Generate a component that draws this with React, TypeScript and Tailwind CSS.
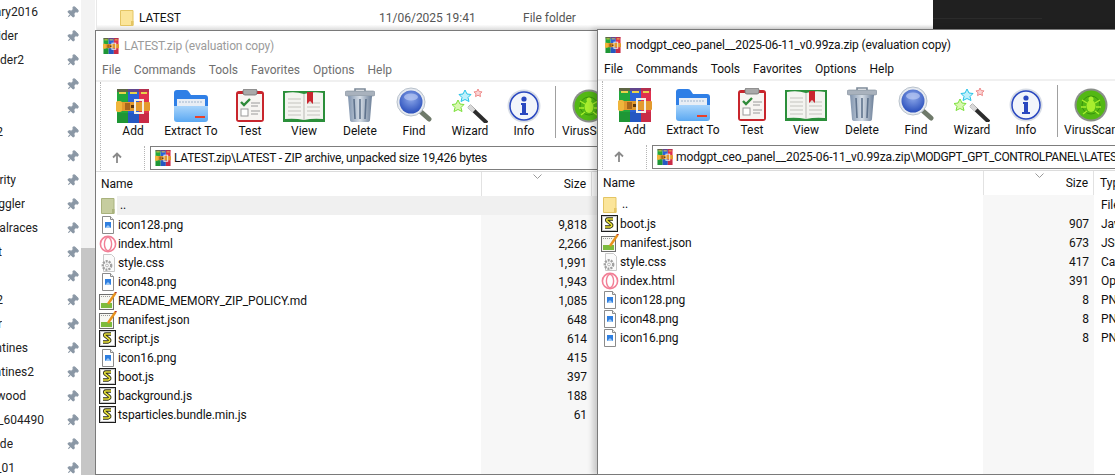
import React from 'react';
import { Pin } from 'lucide-react';

const sideRows = [
  { text: 'ary2016', w: 'w-[38px]' },
  { text: 'ider', w: 'w-[18px]' },
  { text: 'ider2', w: 'w-[24px]' },
  { text: '', w: 'w-[1px]' },
  { text: '', w: 'w-[1px]' },
  { text: '2', w: 'w-[3px]' },
  { text: '', w: 'w-[1px]' },
  { text: 'rity', w: 'w-[16px]' },
  { text: 'ggler', w: 'w-[25px]' },
  { text: 'ialraces', w: 'w-[38px]' },
  { text: 't', w: 'w-[2px]' },
  { text: '', w: 'w-[1px]' },
  { text: '2', w: 'w-[3px]' },
  { text: 'r', w: 'w-[2px]' },
  { text: 'ntines', w: 'w-[28px]' },
  { text: 'ntines2', w: 'w-[34px]' },
  { text: 'wood', w: 'w-[26px]' },
  { text: 's_604490', w: 'w-[44px]' },
  { text: 'de', w: 'w-[13px]' },
  { text: '_01', w: 'w-[15px]' },
];

type FileKind = 'png' | 'opera' | 'css' | 'note' | 'js';
type FileRow = { name: string; size: string; kind: FileKind; type?: string };

const leftFiles: FileRow[] = [
  { name: 'icon128.png', size: '9,818', kind: 'png' },
  { name: 'index.html', size: '2,266', kind: 'opera' },
  { name: 'style.css', size: '1,991', kind: 'css' },
  { name: 'icon48.png', size: '1,943', kind: 'png' },
  { name: 'README_MEMORY_ZIP_POLICY.md', size: '1,085', kind: 'note' },
  { name: 'manifest.json', size: '648', kind: 'note' },
  { name: 'script.js', size: '614', kind: 'js' },
  { name: 'icon16.png', size: '415', kind: 'png' },
  { name: 'boot.js', size: '397', kind: 'js' },
  { name: 'background.js', size: '188', kind: 'js' },
  { name: 'tsparticles.bundle.min.js', size: '61', kind: 'js' },
];

const rightFiles: FileRow[] = [
  { name: 'boot.js', size: '907', kind: 'js', type: 'JavaScript' },
  { name: 'manifest.json', size: '673', kind: 'note', type: 'JSON File' },
  { name: 'style.css', size: '417', kind: 'css', type: 'Cascading' },
  { name: 'index.html', size: '391', kind: 'opera', type: 'Opera Web' },
  { name: 'icon128.png', size: '8', kind: 'png', type: 'PNG File' },
  { name: 'icon48.png', size: '8', kind: 'png', type: 'PNG File' },
  { name: 'icon16.png', size: '8', kind: 'png', type: 'PNG File' },
];

function RarIcon({ size = 34 }: { size?: number }) {
  return (
    <svg width={size} height={size} viewBox="0 0 34 34" className="shrink-0">
      <rect x="1" y="0" width="11" height="34" fill="#22a83c" />
      <rect x="12" y="0" width="11" height="34" fill="#2a62d8" />
      <rect x="23" y="0" width="10" height="34" fill="#e0304e" />
      <rect x="1" y="0" width="32" height="3" fill="#8f2f4f" opacity="0.55" />
      <rect x="3" y="3" width="7" height="2" fill="#e8d24a" />
      <rect x="14" y="3" width="7" height="2" fill="#e8d24a" />
      <rect x="25" y="3" width="6" height="2" fill="#e8d24a" />
      <rect x="1" y="24" width="32" height="10" fill="#000" opacity="0.1" />
      <rect x="0" y="13" width="34" height="9" rx="1" fill="#e39a2e" />
      <rect x="0" y="12" width="6" height="11" rx="2" fill="#f0b63c" />
      <rect x="9" y="14" width="5" height="7" fill="#a9661c" />
      <rect x="19" y="11" width="8" height="13" fill="none" stroke="#f2efe6" strokeWidth="2" />
      <rect x="15" y="16" width="3" height="3" fill="#5b3510" />
    </svg>
  );
}

function ExtractIcon() {
  return (
    <svg width="36" height="34" viewBox="0 0 36 34">
      <defs>
        <linearGradient id="fold" x1="0" y1="0" x2="0" y2="1">
          <stop offset="0" stopColor="#a8d4fb" />
          <stop offset="1" stopColor="#5aa8f2" />
        </linearGradient>
      </defs>
      <path d="M1 4q0-3 3-3h9q2 0 3 2l2 3h14q3 0 3 3v8H1z" fill="#2f7fe6" />
      <rect x="4" y="10" width="28" height="10" fill="#e9eef5" />
      <path d="M6 13h24" stroke="#9fb4cc" strokeWidth="1" strokeDasharray="2 1" />
      <path d="M1 17h34v13q0 3-3 3H4q-3 0-3-3z" fill="url(#fold)" />
      <rect x="22" y="27" width="10" height="2" fill="#e8402a" />
    </svg>
  );
}

function TestIcon() {
  return (
    <svg width="30" height="34" viewBox="0 0 30 34">
      <rect x="1" y="2" width="28" height="31" rx="3" fill="#c8252c" />
      <rect x="3" y="5" width="24" height="26" fill="#f7f5f2" />
      <rect x="8" y="0" width="14" height="6" rx="2" fill="#a9a9a9" stroke="#6e6e6e" strokeWidth="0.8" />
      <path d="M6 13l3 3 6-6" stroke="#2f8a3a" strokeWidth="2.4" fill="none" />
      <path d="M16 14h9M16 17h7M16 22h9M16 25h7" stroke="#9a9a9a" strokeWidth="1" />
      <rect x="6" y="20" width="7" height="7" fill="#fff" stroke="#9a9a9a" />
    </svg>
  );
}

function ViewIcon() {
  return (
    <svg width="42" height="33" viewBox="0 0 42 33">
      <rect x="0" y="1" width="42" height="31" fill="#2b8f3a" />
      <path d="M2 3q10-2 19 1q9-3 19-1v26q-10-1-19 1q-9-2-19-1z" fill="#f4f4f0" />
      <path d="M21 4v26" stroke="#b9b9b4" strokeWidth="1" />
      <path d="M5 9h13M5 13h13M5 17h13M5 21h13M5 25h13M24 13h13M24 17h13M24 21h13M24 25h13" stroke="#c3c3be" strokeWidth="1.2" />
      <path d="M24 2h6v12l-3-3-3 3z" fill="#c9252f" />
    </svg>
  );
}

function TrashIcon() {
  return (
    <svg width="30" height="35" viewBox="0 0 30 35">
      <defs>
        <linearGradient id="can" x1="0" y1="0" x2="1" y2="0">
          <stop offset="0" stopColor="#7f93ad" />
          <stop offset="0.5" stopColor="#d5dde6" />
          <stop offset="1" stopColor="#6d8099" />
        </linearGradient>
      </defs>
      <path d="M10 3V1h10v2" fill="none" stroke="#7d8a99" strokeWidth="1.6" />
      <rect x="0" y="3" width="30" height="5" rx="2" fill="#a9b2bd" stroke="#7d8a99" strokeWidth="0.6" />
      <path d="M3 8h24l-2 24q0 2-3 2H8q-3 0-3-2z" fill="url(#can)" />
      <path d="M9 11l1 20M15 11v20M21 11l-1 20" stroke="#5f738d" strokeWidth="1.6" />
    </svg>
  );
}

function FindIcon() {
  return (
    <svg width="36" height="36" viewBox="0 0 36 36">
      <defs>
        <radialGradient id="lens" cx="0.5" cy="0.35" r="0.7">
          <stop offset="0" stopColor="#8ea9ea" />
          <stop offset="1" stopColor="#2248b8" />
        </radialGradient>
      </defs>
      <path d="M24 24l9 8" stroke="#6f7a6a" strokeWidth="5" strokeLinecap="round" />
      <circle cx="15" cy="15" r="14" fill="#e6eaf0" stroke="#b9c2cc" strokeWidth="1" />
      <circle cx="15" cy="15" r="11.5" fill="url(#lens)" />
      <ellipse cx="15" cy="10" rx="7" ry="3.5" fill="#b8c8f2" opacity="0.7" />
    </svg>
  );
}

function WizardIcon() {
  return (
    <svg width="36" height="34" viewBox="0 0 36 34">
      <path d="M17 17l18 17" stroke="#2c2c2c" strokeWidth="4" />
      <path d="M17 17l5 5" stroke="#d8d8d8" strokeWidth="4" />
      <path d="M13 1l2 4 4 .5-3 3 1 4-4-2-4 2 1-4-3-3 4-.5z" fill="#bff0fb" stroke="#28c3e8" />
      <path d="M26 0l1.2 2.6 2.8.3-2 2 .5 2.7-2.5-1.4-2.5 1.4.5-2.7-2-2 2.8-.3z" fill="#fbd6d6" stroke="#ee8a8a" />
      <path d="M6 11l2 4 4 .5-3 3 1 4-4-2-4 2 1-4-3-3 4-.5z" fill="#d8f8b0" stroke="#7be03a" />
    </svg>
  );
}

function InfoIcon() {
  return (
    <svg width="34" height="34" viewBox="0 0 34 34">
      <circle cx="17" cy="17" r="16.5" fill="#d8dde6" />
      <circle cx="17" cy="17" r="14" fill="#f2f5fb" stroke="#2a48c0" strokeWidth="1.5" />
      <circle cx="17" cy="10" r="2.6" fill="#2a48c0" />
      <path d="M14 14h5v10h2v2h-8v-2h2v-8h-1z" fill="#2a48c0" />
    </svg>
  );
}

function VirusIcon() {
  return (
    <svg width="34" height="34" viewBox="0 0 34 34">
      <circle cx="17" cy="17" r="16.5" fill="#8a8f8a" />
      <circle cx="17" cy="17" r="14.5" fill="#53b814" />
      <circle cx="17" cy="17" r="9" fill="none" stroke="#3a930c" strokeWidth="1" />
      <ellipse cx="17" cy="18" rx="4.5" ry="6" fill="#a8ee2e" />
      <circle cx="17" cy="11" r="2.5" fill="#a8ee2e" />
      <path d="M8 12l5 3M26 12l-5 3M7 19h5M27 19h-5M9 26l4-3M25 26l-4-3" stroke="#a8ee2e" strokeWidth="1.4" />
    </svg>
  );
}

function ToolButton({ label, width, children }: { label: string; width: string; children: React.ReactNode }) {
  return (
    <div className={`flex flex-col items-center shrink-0 ${width}`}>
      <div className="h-[36px] flex items-end justify-center">{children}</div>
      <span className="text-[12px] leading-[16px] whitespace-nowrap">{label}</span>
    </div>
  );
}

function SmallFolder({ color = '#fbe59a', edge = '#e4c564', h = 'h-[16px]' }: { color?: string; edge?: string; h?: string }) {
  return (
    <svg width="14" height="16" viewBox="0 0 14 16" className={h}>
      <path d="M.5.5h12.5v15H.5z" fill={color} stroke={edge} />
      <rect x="11" y="11" width="2.5" height="4.5" fill={edge} />
    </svg>
  );
}

function FileIcon({ kind }: { kind: FileKind }) {
  if (kind === 'png') {
    return (
      <svg width="18" height="18" viewBox="0 0 18 18">
        <path d="M3.5.5h8l3 3v14h-11z" fill="#fff" stroke="#8b8b8b" />
        <path d="M11.5.5v3h3" fill="#eee" stroke="#8b8b8b" />
        <rect x="6" y="6" width="6" height="6" fill="#2f7fe0" />
        <path d="M6 12l3-3 3 3z" fill="#9ec8f4" />
      </svg>
    );
  }
  if (kind === 'opera') {
    return (
      <svg width="18" height="18" viewBox="0 0 18 18">
        <circle cx="9" cy="9" r="7.6" fill="#fff" stroke="#f27f96" strokeWidth="1.6" />
        <ellipse cx="9" cy="9" rx="3.6" ry="6.6" fill="#fff" stroke="#f27f96" strokeWidth="1.4" />
      </svg>
    );
  }
  if (kind === 'css') {
    return (
      <svg width="18" height="18" viewBox="0 0 18 18">
        <path d="M4.5.5h8l3 3v14h-11z" fill="#fbfbfb" stroke="#c9c9c9" />
        <circle cx="8" cy="11.5" r="4.2" fill="none" stroke="#a0a0a0" strokeWidth="2.4" strokeDasharray="2 1" />
        <circle cx="8" cy="11.5" r="1.4" fill="#fff" stroke="#b5b5b5" />
      </svg>
    );
  }
  if (kind === 'note') {
    return (
      <svg width="18" height="18" viewBox="0 0 18 18">
        <rect x="0.5" y="2.5" width="14" height="15" fill="#f7f7f2" stroke="#6e6e6e" />
        <path d="M2 4.5h10" stroke="#9a9a9a" strokeDasharray="1 1" />
        <rect x="2" y="11" width="11" height="5" fill="#7dbb3c" />
        <path d="M16.5 1L9 12" stroke="#e8931e" strokeWidth="2.4" />
        <path d="M16 0l1.5 1" stroke="#b02a1e" strokeWidth="1.5" />
      </svg>
    );
  }
  return (
    <svg width="18" height="18" viewBox="0 0 18 18">
      <rect x="0.5" y="0.5" width="16" height="16" fill="#fff" stroke="#1c1c1c" />
      <rect x="1.5" y="1.5" width="14" height="14" fill="none" stroke="#c8c8c8" />
      <path d="M12 4H7Q5 4 6 6l4 3q2 2-1 3H4" fill="none" stroke="#2b2b12" strokeWidth="3.4" />
      <path d="M12 4H7Q5 4 6 6l4 3q2 2-1 3H4" fill="none" stroke="#eae23a" strokeWidth="1.6" />
    </svg>
  );
}

function ZipWindow({
  active,
  position,
  title,
  address,
  addressClass,
  addressTail,
  files,
  upColor,
  upEdge,
  upBg,
  upType,
}: {
  active: boolean;
  position: string;
  title: string;
  address: string;
  addressClass: string;
  addressTail?: string;
  files: FileRow[];
  upColor: string;
  upEdge: string;
  upBg: string;
  upType?: string;
}) {
  const sizeCol = 'w-[111px] self-stretch shrink-0';
  return (
    <div className={`absolute flex flex-col overflow-hidden bg-white border border-[#7a7a7a] ${position}`}>
      <div className="flex items-center h-[29px] pl-[7px] gap-[5px] shrink-0">
        <RarIcon size={16} />
        <span className={`pt-[1px] text-[12px] tracking-[-0.14px] whitespace-nowrap ${active ? 'text-[#111]' : 'text-[#9b9b9b]'}`}>{title}</span>
      </div>
      <div className={`flex items-center h-[20px] pl-[6px] gap-[13px] text-[12px] shrink-0 ${active ? 'text-[#111]' : 'text-[#6f6f6f]'}`}>
        <span>File</span>
        <span>Commands</span>
        <span>Tools</span>
        <span>Favorites</span>
        <span>Options</span>
        <span>Help</span>
      </div>
      <div className="flex h-[66px] shrink-0 border-t-2 border-[#f0f0f0] text-[#111]">
        <div className="w-[4px] shrink-0" />
        <div className="h-[88px] w-[1px] shrink-0 border-l border-dotted border-[#b5b5b5]" />
        <div className="flex pl-[9px] pt-[5px]">
          <ToolButton label="Add" width="w-[46px]"><RarIcon /></ToolButton>
          <ToolButton label="Extract To" width="w-[70px]"><ExtractIcon /></ToolButton>
          <ToolButton label="Test" width="w-[48px]"><TestIcon /></ToolButton>
          <ToolButton label="View" width="w-[60px]"><ViewIcon /></ToolButton>
          <ToolButton label="Delete" width="w-[52px]"><TrashIcon /></ToolButton>
          <ToolButton label="Find" width="w-[56px]"><FindIcon /></ToolButton>
          <ToolButton label="Wizard" width="w-[56px]"><WizardIcon /></ToolButton>
          <ToolButton label="Info" width="w-[52px]"><InfoIcon /></ToolButton>
          <div className="ml-[5px] mt-[-1px] h-[52px] w-[1px] shrink-0 bg-[#a0a0a0]" />
          <ToolButton label="VirusScan" width="w-[66px]"><VirusIcon /></ToolButton>
        </div>
      </div>
      <div className="flex h-[24px] shrink-0">
        <div className="w-[48px] shrink-0 flex items-center pl-[15px]">
          <svg width="12" height="12" viewBox="0 0 12 12">
            <path d="M6 11V2M2 5.5L6 1.5l4 4" fill="none" stroke="#8a8a8a" strokeWidth="1.8" />
          </svg>
        </div>
        <div className="w-[1px] shrink-0 border-l border-dotted border-[#b5b5b5]" />
        <div className="ml-[5px] grow flex items-center gap-[3px] pl-[4px] border border-[#7d7d7d] overflow-hidden">
          <RarIcon size={16} />
          <span className="text-[12px] text-[#111] whitespace-nowrap">
            <span className={addressClass}>{address}</span>
            {addressTail && <span className="tracking-[-0.4px]">{addressTail}</span>}
          </span>
        </div>
      </div>
      <div className="flex h-[25px] shrink-0 mt-[1px] border-t border-[#dcdcdc] text-[12px] text-[#111]">
        <div className="w-[385px] shrink-0 flex items-center pl-[5px]">Name</div>
        <div className={`${sizeCol} relative flex items-center justify-end pr-[5px] border-x border-[#e2e2e2]`}>
          Size
          <svg width="9" height="5" viewBox="0 0 9 5" className="absolute top-[2px] left-[51px]">
            <path d="M.5.5l4 4 4-4" fill="none" stroke="#9a9a9a" />
          </svg>
        </div>
        {upType !== undefined && <div className="flex items-center pl-[6px] whitespace-nowrap">Type</div>}
      </div>
      <div className="flex flex-col grow text-[12px] tracking-[-0.1px] text-[#111]">
        <div className="flex h-[19px] shrink-0 items-center">
          <div className="w-[385px] self-stretch shrink-0 flex items-center pl-[5px] gap-[2px]">
            <SmallFolder color={upColor} edge={upEdge} />
            <span className={`grow self-stretch leading-[19px] pl-[3px] ${upBg}`}>..</span>
          </div>
          <div className={`${sizeCol} ${upBg === 'bg-white' ? 'bg-[#f7f7f7]' : upBg}`} />
          {upType !== undefined && <span className="pl-[7px] whitespace-nowrap">{upType}</span>}
          {upType === undefined && <div className={`grow self-stretch ${upBg}`} />}
        </div>
        {files.map((f) => (
          <div key={f.name} className="flex h-[19px] shrink-0 items-center">
            <div className="w-[385px] shrink-0 flex items-center pl-[3px] gap-[1px]">
              <FileIcon kind={f.kind} />
              <span className="whitespace-nowrap">{f.name}</span>
            </div>
            <div className={`${sizeCol} flex items-center justify-end pr-[5px] bg-[#f7f7f7]`}>{f.size}</div>
            {f.type ? <span className="pl-[7px] whitespace-nowrap">{f.type}</span> : <div className="grow self-stretch bg-[#f7f7f7]" />}
          </div>
        ))}
        <div className="flex grow">
          <div className="w-[385px] shrink-0" />
          <div className={`${sizeCol} bg-[#f7f7f7]`} />
          {upType === undefined && <div className="grow bg-[#f7f7f7]" />}
        </div>
      </div>
    </div>
  );
}

export default function App() {
  return (
    <div
      className="relative w-[1115px] h-[475px] overflow-hidden bg-white text-[12px] text-[#111]"
      style={{ fontFamily: 'Roboto, "Noto Sans", sans-serif' }}
    >
      <div className="flex h-full">
        <div className="w-[81px] shrink-0 flex flex-col">
          {sideRows.map((r, i) => (
            <div key={i} className="flex items-center h-6 shrink-0">
              <div className="w-[66px] shrink-0">
                <div className={`flex justify-end overflow-hidden whitespace-nowrap text-[#222] ${r.w}`}>{r.text}</div>
              </div>
              <Pin size={13} className="rotate-45 text-[#8a97a5] fill-[#8a97a5]" />
            </div>
          ))}
        </div>
        <div className="w-[14px] shrink-0 flex flex-col bg-[#f3f3f3]">
          <div className="h-[248px] shrink-0" />
          <div className="grow bg-[#c6c6c6]" />
        </div>
        <div className="w-[837px] shrink-0 relative border-l border-[#e8e8e8] ml-[1px]">
          <div className="flex items-center h-[35px] pl-[23px] bg-gradient-to-b from-white from-70% to-[#bdbdbd]">
            <SmallFolder />
            <span className="ml-[5px] w-[240px] pt-[1px]">LATEST</span>
            <span className="w-[144px] pt-[1px] text-[#555]">11/06/2025 19:41</span>
            <span className="pt-[1px] text-[#555]">File folder</span>
          </div>
        </div>
        <div className="grow bg-[#202020] flex flex-col">
          <div className="h-[19px] w-[109px] border-b border-[#2b2b2b]" />
        </div>
      </div>

      <ZipWindow
        active={false}
        position="left-[95px] top-[30px] w-[510px] h-[445px]"
        title="LATEST.zip (evaluation copy)"
        address="LATEST.zip\LATEST - ZIP archive, unpacked size 19,426 bytes"
        addressClass="tracking-[-0.24px]"
        files={leftFiles}
        upColor="#c6cd9f"
        upEdge="#a9b27d"
        upBg="bg-[#f0f0f0]"
      />
      <ZipWindow
        active
        position="left-[597px] top-[29px] w-[530px] h-[446px] shadow-[-4px_0_6px_rgba(0,0,0,0.2)]"
        title="modgpt_ceo_panel__2025-06-11_v0.99za.zip (evaluation copy)"
        address="modgpt_ceo_panel__2025-06-11_v0.99za.zip\"
        addressClass="tracking-[-0.1px]"
        addressTail="MODGPT_GPT_CONTROLPANEL\LATEST"
        files={rightFiles}
        upColor="#fbe59a"
        upEdge="#e4c564"
        upBg="bg-white"
        upType="File folder"
      />
    </div>
  );
}
